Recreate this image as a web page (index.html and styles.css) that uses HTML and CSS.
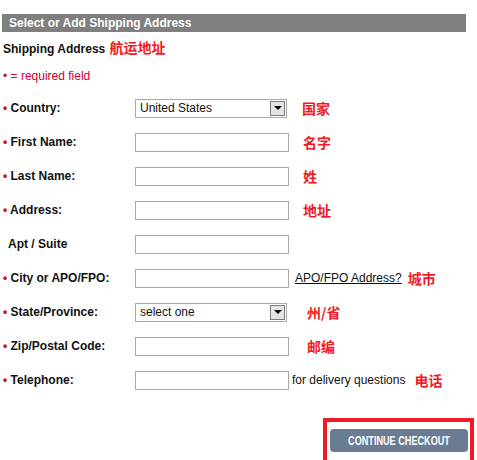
FILE: index.html
```html
<!DOCTYPE html>
<html lang="en">
<head>
    <meta charset="UTF-8">
    <title>Select or Add Shipping Address</title>
    <link rel="stylesheet" href="styles.css">
</head>
<body>
    <div class="page">
        <div class="bar">Select or Add Shipping Address</div>
        <div class="title">Shipping Address <span class="zh">航运地址</span></div>
        <div class="required"><span class="dot">•</span> = required field</div>

        <div class="form">
            <div class="row">
                <label><span class="dot">•</span> Country:</label>
                <div class="select"><span>United States</span><span class="select-btn"><i></i></span></div>
                <span class="zh note">国家</span>
            </div>
            <div class="row">
                <label><span class="dot">•</span> First Name:</label>
                <input type="text">
                <span class="zh note">名字</span>
            </div>
            <div class="row">
                <label><span class="dot">•</span> Last Name:</label>
                <input type="text">
                <span class="zh note">姓</span>
            </div>
            <div class="row">
                <label><span class="dot">•</span> Address:</label>
                <input type="text">
                <span class="zh note">地址</span>
            </div>
            <div class="row">
                <label class="plain">Apt / Suite</label>
                <input type="text">
            </div>
            <div class="row">
                <label><span class="dot">•</span> City or APO/FPO:</label>
                <input type="text">
                <a class="hint" href="#">APO/FPO Address?</a>
                <span class="zh">城市</span>
            </div>
            <div class="row">
                <label><span class="dot">•</span> State/Province:</label>
                <div class="select"><span>select one</span><span class="select-btn"><i></i></span></div>
                <span class="zh note wide">州/省</span>
            </div>
            <div class="row">
                <label><span class="dot">•</span> Zip/Postal Code:</label>
                <input type="text">
                <span class="zh note wide">邮编</span>
            </div>
            <div class="row">
                <label><span class="dot">•</span> Telephone:</label>
                <input type="text">
                <span class="hint-text">for delivery questions</span>
                <span class="zh">电话</span>
            </div>
        </div>

        <div class="actions">
            <div class="frame">
                <button class="btn-continue"><span>CONTINUE CHECKOUT</span></button>
            </div>
        </div>
    </div>
</body>
</html>
```

FILE: styles.css
```css
body {
    margin: 0;
    font-family: Arial, "Liberation Sans", sans-serif;
    font-size: 12px;
    color: #111;
    background: #fff;
}
.page {
    padding: 14px 3px 0 2px;
}
.bar {
    width: 457px;
    height: 18px;
    line-height: 18px;
    padding-left: 7px;
    background: #7f7f7f;
    color: #fff;
    font-weight: bold;
}
.title {
    margin-top: 7px;
    height: 16px;
    line-height: 16px;
    padding-left: 1px;
    font-weight: bold;
}
.title .zh {
    margin-left: 1px;
}
.zh {
    font-family: "Noto Sans CJK SC", sans-serif;
    font-size: 14px;
    font-weight: bold;
    color: #f01a24;
}
.required {
    margin-top: 13px;
    height: 16px;
    line-height: 16px;
    padding-left: 1px;
    color: #cc0033;
}
.dot {
    color: #cc1122;
}
.form {
    margin-top: 7px;
}
.row {
    display: flex;
    align-items: center;
    height: 34px;
}
.row label {
    width: 132px;
    padding-left: 1px;
    font-weight: bold;
}
.row label.plain {
    padding-left: 6px;
    width: 127px;
}
.row input {
    width: 154px;
    height: 19px;
    margin: 0;
    padding: 0 4px;
    box-sizing: border-box;
    border: 1px solid #a8a8ad;
    font-size: 12px;
}
.select {
    display: flex;
    align-items: center;
    justify-content: space-between;
    width: 152px;
    height: 19px;
    box-sizing: border-box;
    border: 1px solid #a8a8ad;
    padding-left: 4px;
    font-size: 12px;
}
.select-btn {
    display: flex;
    align-items: center;
    justify-content: center;
    width: 15px;
    height: 15px;
    margin-right: 1px;
    box-sizing: border-box;
    border: 1px solid #7a7a7a;
    background: #e4e4e4;
}
.select-btn i {
    width: 0;
    height: 0;
    border-left: 4px solid transparent;
    border-right: 4px solid transparent;
    border-top: 4px solid #000;
}
.note {
    margin-left: 14px;
}
.row .select + .note {
    margin-left: 15px;
}
.row .select + .note.wide {
    margin-left: 20px;
}
.note.wide {
    margin-left: 18px;
}
.hint {
    margin-left: 6px;
    color: #111;
    text-decoration: underline;
}
.hint + .zh {
    margin-left: 6px;
}
.hint-text {
    margin-left: 3px;
}
.hint-text + .zh {
    margin-left: 9px;
}
.actions {
    display: flex;
    justify-content: flex-end;
    margin-top: 21px;
}
.frame {
    width: 138px;
    height: 40px;
    border: 4px solid #ee1c25;
    border-bottom: none;
    padding: 7px 2px 0 3px;
}
.btn-continue {
    display: flex;
    align-items: center;
    justify-content: center;
    width: 138px;
    height: 23px;
    padding: 0;
    border: none;
    border-radius: 4px;
    background: #6a7c92;
    color: #fff;
    font-family: Arial, "Liberation Sans", sans-serif;
    font-size: 12px;
    font-weight: bold;
    cursor: pointer;
}
.btn-continue span {
    display: inline-block;
    transform: scaleX(0.76);
    white-space: nowrap;
}
```
